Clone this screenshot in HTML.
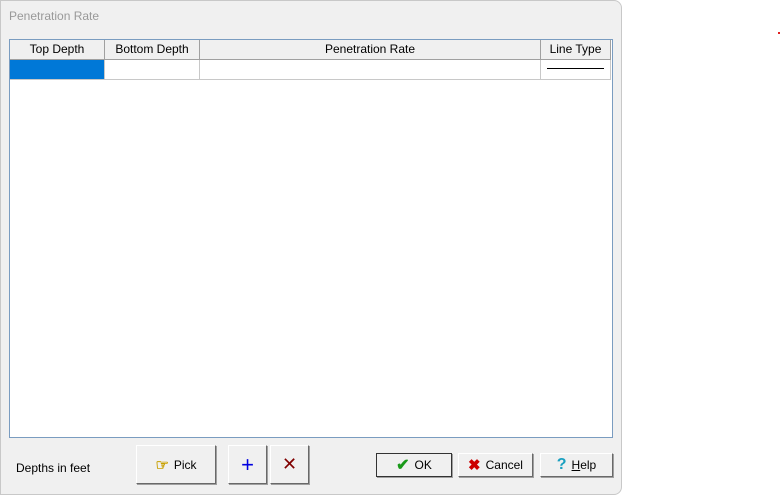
<!DOCTYPE html>
<html><head><style>
body{margin:0;width:783px;height:495px;background:#fff;position:relative;overflow:hidden;font-family:"Liberation Sans",sans-serif;font-size:12px;}
.dlg{position:absolute;left:0;top:0;width:620px;height:493px;background:#f0f0f0;border:1px solid #c8c8c8;border-radius:0 8px 8px 0;}
.title{position:absolute;left:8px;top:8px;color:#999;font-size:12px;}
.grid{position:absolute;left:8px;top:38px;width:602px;height:397px;background:#fff;border:1px solid #7a9cc0;}
.c{position:absolute;box-sizing:border-box;text-align:center;}
.h{top:0;height:20px;line-height:19px;background:#f0f0f0;border-right:1px solid #a0a0a0;border-bottom:1px solid #a0a0a0;color:#000;}
.r{top:20px;height:20px;border-right:1px solid #c8c8c8;border-bottom:1px solid #c8c8c8;}
.btn{position:absolute;box-sizing:border-box;background:#f0f0f0;border:1px solid;border-color:#fff #696969 #696969 #fff;box-shadow:1px 1px 0 #a0a0a0;display:flex;align-items:center;justify-content:center;gap:5px;font-size:12px;}
</style></head><body>
<div class="dlg">
<div class="title">Penetration Rate</div>
<div class="grid">
<div class="c h" style="left:0;width:95px">Top Depth</div>
<div class="c h" style="left:95px;width:95px">Bottom Depth</div>
<div class="c h" style="left:190px;width:341px">Penetration Rate</div>
<div class="c h" style="left:531px;width:70px">Line Type</div>
<div class="c r" style="left:0;width:95px;background:#0078d7"></div>
<div class="c r" style="left:95px;width:95px"></div>
<div class="c r" style="left:190px;width:341px"></div>
<div class="c r" style="left:531px;width:70px"><div style="position:absolute;left:6px;right:6px;top:8px;border-top:1px solid #000"></div></div>
</div>
<div style="position:absolute;left:15px;top:460px">Depths in feet</div>
<div class="btn" style="left:135px;top:444px;width:80px;height:39px"><span style="color:#c8a000;font-size:15px;font-weight:bold">☞</span>Pick</div>
<div class="btn" style="left:227px;top:444px;width:39px;height:39px;color:#0000e0;font-size:22px">+</div>
<div class="btn" style="left:269px;top:444px;width:39px;height:39px;color:#800000;font-size:18px">✕</div>
<div class="btn" style="left:375px;top:452px;width:76px;height:24px;border:1px solid #333"><span style="color:#1a9a1a;font-size:16px;font-weight:bold">✔</span>OK</div>
<div class="btn" style="left:457px;top:452px;width:75px;height:24px"><span style="color:#c00;font-size:15px;font-weight:bold">✖</span>Cancel</div>
<div class="btn" style="left:539px;top:452px;width:73px;height:24px"><span style="color:#1aa0c0;font-size:16px;font-weight:bold">?</span><span><u>H</u>elp</span></div>
</div>
<div style="position:absolute;left:778px;top:32px;width:2px;height:2px;background:#e02020"></div>
</body></html>
